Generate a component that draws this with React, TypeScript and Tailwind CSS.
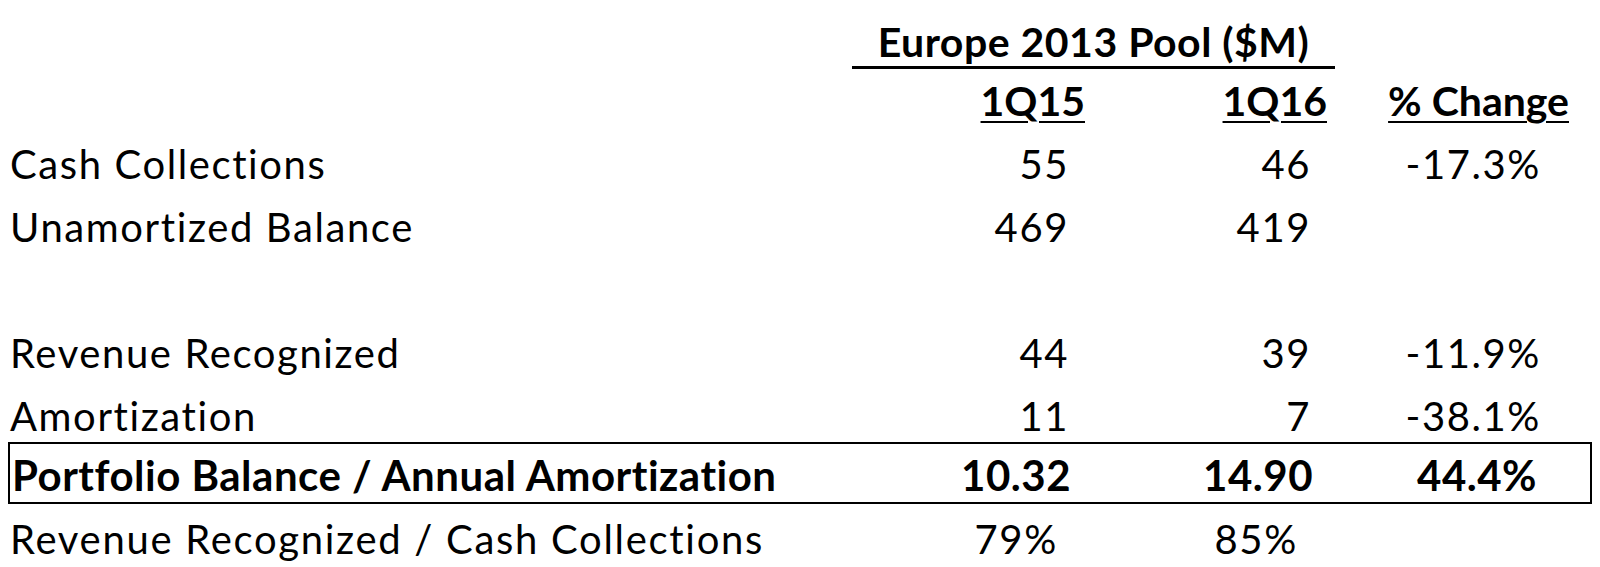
import React from "react";

type Row = {
  label: string;
  a: string;
  b: string;
  c: string;
  pct?: boolean;
  boxed?: boolean;
};

const rows: Row[] = [
  { label: "Cash Collections", a: "55", b: "46", c: "-17.3%" },
  { label: "Unamortized Balance", a: "469", b: "419", c: "" },
  { label: "", a: "", b: "", c: "" },
  { label: "Revenue Recognized", a: "44", b: "39", c: "-11.9%" },
  { label: "Amortization", a: "11", b: "7", c: "-38.1%" },
  { label: "Portfolio Balance / Annual Amortization", a: "10.32", b: "14.90", c: "44.4%", boxed: true },
  { label: "Revenue Recognized / Cash Collections", a: "79%", b: "85%", c: "", pct: true },
];

const cols = "grid grid-cols-[844px_238px_245px_255px]";

export default function App() {
  return (
    <main
      className="w-[1600px] h-[567px] bg-white text-black px-[8px] overflow-hidden"
      style={{ fontFamily: "Lato, 'Liberation Sans', sans-serif" }}
    >
      {/* header */}
      <div className={`${cols} h-[69px] items-end`}>
        <div />
        <div className="col-span-2 border-b-[3px] border-black text-center text-[41px] font-bold leading-[48px] tracking-[0.5px]">
          Europe 2013 Pool ($M)
        </div>
      </div>
      <div className={`${cols} h-[63px] items-center text-[41px] font-bold`}>
        <div />
        <div className="text-right pr-[5px]"><span className="underline underline-offset-[5px] decoration-2">1Q15</span></div>
        <div className="text-right pr-[8px]"><span className="underline underline-offset-[5px] decoration-2">1Q16</span></div>
        <div className="text-right pr-[21px]"><span className="underline underline-offset-[5px] decoration-2">% Change</span></div>
      </div>

      {rows.map((r, i) => (
        <div
          key={i}
          className={`${cols} items-center ${
            r.boxed
              ? "-mt-[5px] h-[62px] border-2 border-black text-[42px] font-bold tracking-[0.5px]"
              : r.pct
              ? "h-[70px] text-[40px] tracking-[1.7px]"
              : "h-[63px] text-[40px] tracking-[1.6px]"
          }`}
        >
          <div className="pl-[2px]">{r.label}</div>
          <div className={`text-right ${r.pct ? "pr-[32px]" : "pr-[21px]"}`}>{r.a}</div>
          <div className={`text-right ${r.pct ? "pr-[37px]" : "pr-[24px]"}`}>{r.b}</div>
          <div className={`text-right ${r.boxed ? "pr-[55px]" : "pr-[49px]"}`}>{r.c}</div>
        </div>
      ))}
    </main>
  );
}
